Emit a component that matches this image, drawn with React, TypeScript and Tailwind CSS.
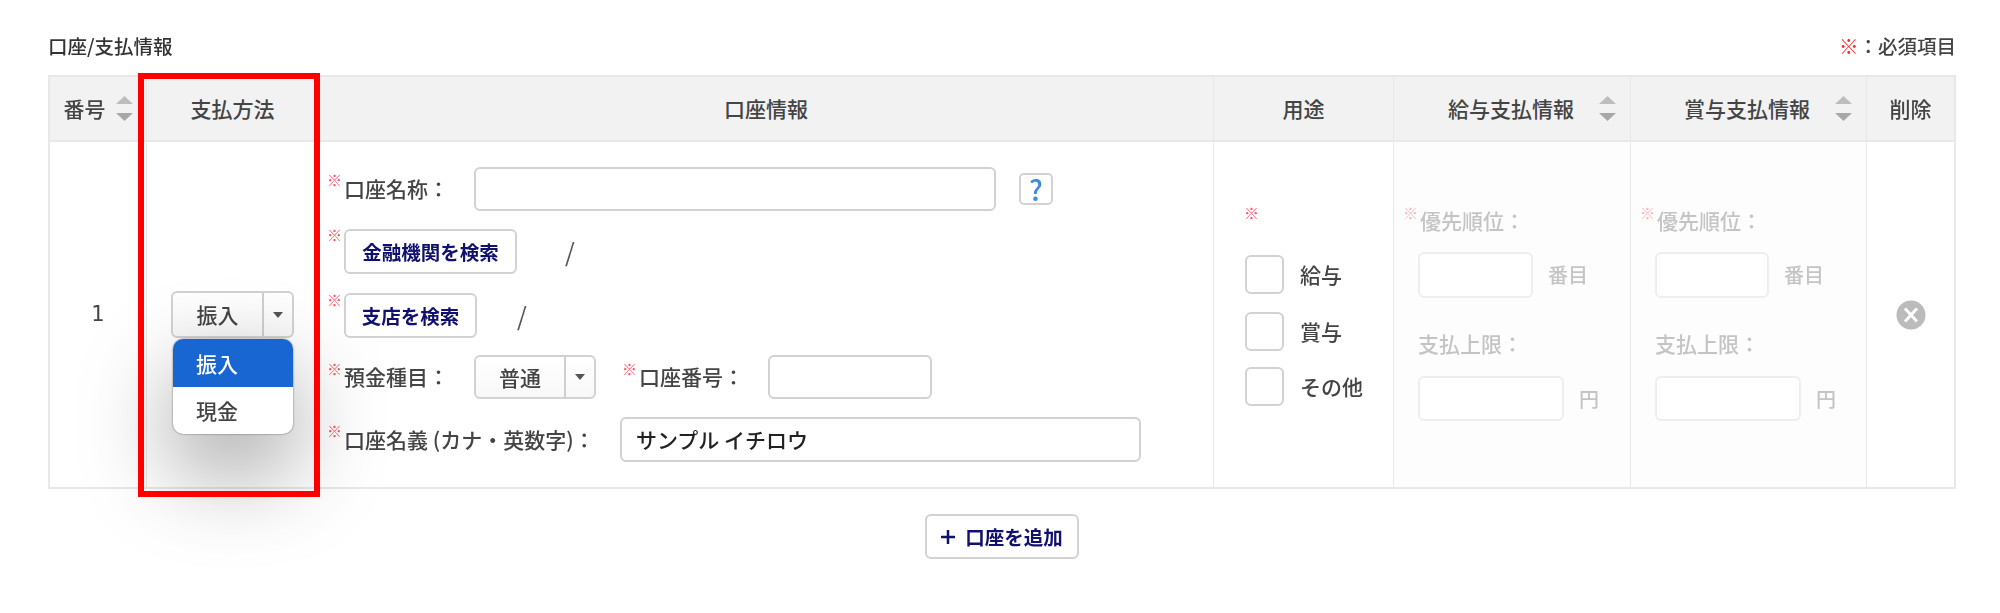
import { ReactNode } from "react";

function Req({ className = "" }: { className?: string }) {
  return (
    <span className={`-ml-[1px] mr-[1px] h-[11px] w-[16px] shrink-0 self-start text-[15px] font-bold leading-[11px] ${className}`}>
      ※
    </span>
  );
}

function Sort() {
  return (
    <svg width="17" height="26" viewBox="0 0 17 26" className="shrink-0" aria-hidden="true">
      <path d="M8.5 0 L17 8 H0 Z" fill="#bdbdbd" />
      <path d="M0 17 H17 L8.5 25 Z" fill="#a8a8a8" />
    </svg>
  );
}

function Caret() {
  return (
    <svg width="10" height="6" viewBox="0 0 10 6" aria-hidden="true">
      <path d="M0 0 H10 L5 6 Z" fill="#555" />
    </svg>
  );
}

function SplitSelect({ label, width }: { label: string; width: string }) {
  return (
    <div className={`flex h-full items-stretch rounded-[6px] border-2 border-[#d2d2d2] bg-gradient-to-b from-white to-[#f8f8f8] ${width}`}>
      <span className="flex flex-1 items-center justify-center pt-[1px] text-[21px] font-medium text-[#444]">{label}</span>
      <span className="flex w-[30px] items-center justify-center border-l-2 border-[#cfcfcf]">
        <Caret />
      </span>
    </div>
  );
}

function HeadCell({ children, className = "justify-center border-r-[1.5px]" }: { children: ReactNode; className?: string }) {
  return (
    <div className={`flex items-center border-b-2 border-[#e8e8e8] bg-[#f2f2f2] text-[21px] font-medium text-[#444] ${className}`}>
      {children}
    </div>
  );
}

function NavyButton({ children, className = "" }: { children: ReactNode; className?: string }) {
  return (
    <button
      className={`flex items-center justify-center rounded-[6px] border-2 border-[#d2d2d2] bg-white text-[19.5px] font-bold text-[#10106e] ${className}`}
    >
      {children}
    </button>
  );
}

function TextBox({ className = "" }: { className?: string }) {
  return <div className={`rounded-[6px] border-2 border-[#d2d2d2] bg-white ${className}`} />;
}

function Check({ label, className = "" }: { label: string; className?: string }) {
  return (
    <div className={`flex items-center gap-[16px] ${className}`}>
      <span className="h-[39px] w-[39px] rounded-[6px] border-2 border-[#d2d2d2] bg-white" />
      <span className="text-[21px] font-medium text-[#444]">{label}</span>
    </div>
  );
}

function PayInfo({ firstWidth, secondWidth }: { firstWidth: string; secondWidth: string }) {
  return (
    <div className="border-r-[1.5px] border-[#e8e8e8] bg-[#fdfdfd] pl-[10px] pt-[64px] text-[21px] font-medium text-[#c4c4c4]">
      <div className="flex h-[30px] items-center">
        <Req className="mt-[1px] w-[14px] text-[#ffb3ba]" />
        <span>優先順位：</span>
      </div>
      <div className="ml-[14px] mt-[16px] flex items-center">
        <div className={`h-[46px] rounded-[6px] border-2 border-[#eeeeee] bg-white ${firstWidth}`} />
        <span className="ml-[15px] text-[20px]">番目</span>
      </div>
      <div className="ml-[14px] mt-[31px] flex h-[30px] items-center">支払上限：</div>
      <div className="ml-[14px] mt-[17px] flex items-center">
        <div className={`h-[45px] rounded-[6px] border-2 border-[#eeeeee] bg-white ${secondWidth}`} />
        <span className="ml-[15px] text-[20px]">円</span>
      </div>
    </div>
  );
}

export default function App() {
  return (
    <div className="relative h-[613px] w-[2000px] overflow-hidden bg-white font-['Noto_Sans_CJK_JP',sans-serif]">
      <div className="h-full pl-[48px] pt-[32px] blur-[0.45px]">
        <div className="flex h-[28px] w-[1908px] items-center justify-between">
          <h2 className="text-[19.5px] font-medium text-[#333]">口座/支払情報</h2>
          <p className="text-[19.5px] font-medium text-[#444]">
            <span className="text-[#ff2a2a]">※</span>：必須項目
          </p>
        </div>

        <div className="mt-[15px] w-[1908px] border-2 border-[#e8e8e8]">
          <div className="grid grid-cols-[97px_172px_895px_180px_237px_236px_87px] grid-rows-[65px_345px]">
            <HeadCell>
              <span className="mr-[10px]">番号</span>
              <Sort />
            </HeadCell>
            <HeadCell>支払方法</HeadCell>
            <HeadCell>口座情報</HeadCell>
            <HeadCell>用途</HeadCell>
            <HeadCell className="justify-end border-r-[1.5px] pr-[14px]">
              <span className="mr-[25px]">給与支払情報</span>
              <Sort />
            </HeadCell>
            <HeadCell className="justify-end border-r-[1.5px] pr-[14px]">
              <span className="mr-[25px]">賞与支払情報</span>
              <Sort />
            </HeadCell>
            <HeadCell className="justify-center">削除</HeadCell>

            <div className="flex items-center justify-center border-r-[1.5px] border-[#e8e8e8] font-['DejaVu_Sans',sans-serif] text-[21px] text-[#444]">
              1
            </div>

            <div className="flex items-center justify-center border-r-[1.5px] border-[#e8e8e8]">
              <div className="relative h-[47px]">
                <SplitSelect label="振入" width="w-[123px]" />
                <div className="absolute left-[2px] top-[48px] z-10 w-[120px] overflow-hidden rounded-[10px] bg-white text-[21px] font-medium shadow-[0_0_2px_rgba(0,0,0,0.6),0_36px_90px_rgba(0,0,0,0.38)]">
                  <div className="flex h-[48px] items-center bg-[#1766d2] pl-[23px] pt-[1px] text-white">振入</div>
                  <div className="flex h-[47px] items-center pl-[23px] text-[#444]">現金</div>
                </div>
              </div>
            </div>

            <div className="border-r-[1.5px] border-[#e8e8e8] pl-[9px] pt-[25px] text-[21px] font-medium text-[#444]">
              <div className="flex h-[44px] items-center">
                <Req className="mt-[7px] text-[#ff5566]" />
                <span className="w-[130px]">口座名称：</span>
                <TextBox className="h-[44px] w-[522px]" />
                <span className="ml-[23px] flex h-[32px] w-[34px] items-center justify-center rounded-[5px] border-2 border-[#d2d2d2] text-[28px] text-[#3f8ae6]">
                  ?
                </span>
              </div>
              <div className="mt-[18px] flex h-[45px] items-center">
                <Req className="text-[#ff5566]" />
                <NavyButton className="h-[45px] w-[173px]">金融機関を検索</NavyButton>
                <span className="ml-[48px] text-[25px] font-normal text-[#555]">/</span>
              </div>
              <div className="mt-[19px] flex h-[45px] items-center">
                <Req className="mt-[1px] text-[#ff5566]" />
                <NavyButton className="h-[45px] w-[133px]">支店を検索</NavyButton>
                <span className="ml-[40px] text-[25px] font-normal text-[#555]">/</span>
              </div>
              <div className="mt-[17px] flex h-[44px] items-center">
                <Req className="mt-[8px] text-[#ff5566]" />
                <span className="w-[130px]">預金種目：</span>
                <SplitSelect label="普通" width="w-[122px]" />
                <Req className="ml-[26px] mt-[8px] text-[#ff5566]" />
                <span className="w-[129px]">口座番号：</span>
                <TextBox className="h-[44px] w-[164px]" />
              </div>
              <div className="mt-[18px] flex h-[45px] items-center">
                <Req className="mt-[8px] text-[#ff5566]" />
                <span className="w-[276px]">口座名義 (カナ・英数字)：</span>
                <div className="flex h-[45px] w-[521px] items-center rounded-[6px] border-2 border-[#d2d2d2] bg-white pl-[14px] text-[21px] font-medium text-[#222]">
                  サンプル イチロウ
                </div>
              </div>
            </div>

            <div className="border-r-[1.5px] border-[#e8e8e8] pl-[31px] pt-[65px]">
              <Req className="block text-[#ff5566]" />
              <Check label="給与" className="mt-[37px]" />
              <Check label="賞与" className="mt-[18px]" />
              <Check label="その他" className="mt-[16px]" />
            </div>

            <PayInfo firstWidth="w-[115px]" secondWidth="w-[146px]" />
            <PayInfo firstWidth="w-[114px]" secondWidth="w-[146px]" />

            <div className="flex items-center justify-center">
              <svg width="30" height="30" viewBox="0 0 30 30" aria-hidden="true">
                <circle cx="15" cy="15" r="14.5" fill="#bbbbbb" />
                <path d="M9 8.5 L21 21.5 M21 8.5 L9 21.5" stroke="#fff" strokeWidth="3" />
              </svg>
            </div>
          </div>
        </div>

        <div className="mt-[25px] flex w-[1908px] justify-center">
          <NavyButton className="h-[45px] w-[154px] gap-[10px]">
            <svg width="14" height="14" viewBox="0 0 14 14" aria-hidden="true">
              <path d="M7 0 V14 M0 7 H14" stroke="#10106e" strokeWidth="2.5" />
            </svg>
            口座を追加
          </NavyButton>
        </div>
      </div>

      {/* annotation frame */}
      <div className="pointer-events-none absolute left-[138px] top-[73px] z-20 h-[424px] w-[182px] border-[6px] border-[#ff0000]" />
    </div>
  );
}
